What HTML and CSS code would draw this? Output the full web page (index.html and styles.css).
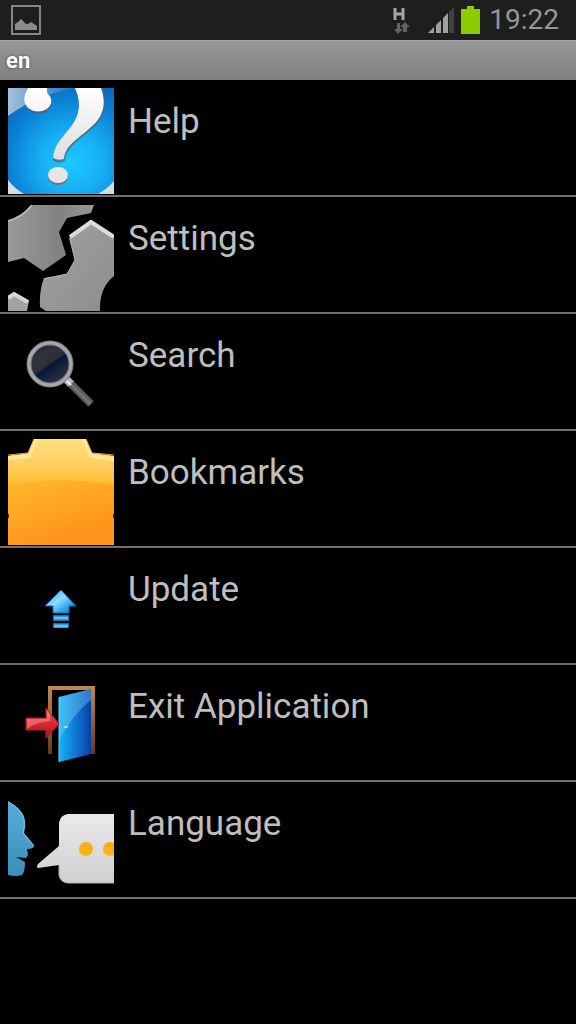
FILE: index.html
```html
<!DOCTYPE html>
<html lang="en">
<head>
  <meta charset="UTF-8">
  <meta name="viewport" content="width=device-width, initial-scale=1">
  <title>en</title>
  <link rel="stylesheet" href="styles.css">
</head>
<body>
<div class="status">
  <svg class="picture" width="30" height="30" viewBox="0 0 30 30">
    <rect x="1" y="1" width="28" height="28" fill="none" stroke="#858585" stroke-width="2"/>
    <path d="M4 25V19L7 17L10 14L15 19H17L20 17L26 21V25Z" fill="#8c8c8c"/>
  </svg>
  <svg class="network" width="18" height="28" viewBox="0 0 18 28">
    <path d="M2 2V14M10 2V14M2 8H10" fill="none" stroke="#a5a5a5" stroke-width="3"/>
    <path d="M4 17H7V23H10L5 28L1 23H4ZM10 26V21H7L12 16L17 21H14V26Z" fill="#626262"/>
  </svg>
  <svg class="signal" width="28" height="27" viewBox="0 0 28 27">
    <path d="M1 26L7 20V26ZM9 26V18L14 13V26ZM16 26V11L21 6V26Z" fill="#a0a0a0"/>
    <path d="M22 26V5L27 0V26Z" fill="#414141"/>
  </svg>
  <svg class="battery" width="19" height="29" viewBox="0 0 19 29">
    <path d="M0 3H6V0H13V3H19V28H0Z" fill="#8dcc00"/>
  </svg>
  <span class="clock">19:22</span>
</div>
<h1 class="title">en</h1>
<ul class="menu">
  <li>
    <a href="#">
      <svg viewBox="0 0 106 106">
        <defs>
          <radialGradient id="helpBlue" cx="0.6" cy="0.7" r="0.8">
            <stop offset="0" stop-color="#1cc8ff"/>
            <stop offset="0.35" stop-color="#18b0f6"/>
            <stop offset="0.75" stop-color="#0a7fd3"/>
            <stop offset="1" stop-color="#0c66bc"/>
          </radialGradient>
          <linearGradient id="helpShine" x1="0" y1="0" x2="1" y2="0">
            <stop offset="0" stop-color="#a4bfde"/>
            <stop offset="1" stop-color="#1b74c4"/>
          </linearGradient>
          <linearGradient id="helpMark" x1="0" y1="0" x2="0" y2="1">
            <stop offset="0" stop-color="#fff"/>
            <stop offset="1" stop-color="#dedede"/>
          </linearGradient>
        </defs>
        <rect width="106" height="106" fill="url(#helpBlue)"/>
        <path d="M0 0H68Q30 6 0 28Z" fill="url(#helpShine)"/>
        <path d="M0 92Q7 101 16 106H0ZM106 93Q99 101 90 106H106Z" fill="#d5dde4"/>
        <path d="M20 0Q14 13 19 20Q28 30 40 23Q47 16 42 8Q38 5 39 0ZM67 0Q75 14 69 29C64 44 46 51 45 72Q50 77 57 73C58 57 75 51 90 35Q101 22 95 0Z" fill="#555f69" opacity="0.7"/>
        <path d="M20 0Q13 12 19 19Q28 27 39 21Q46 15 42 8Q38 5 39 0ZM67 0Q73 13 70 25C65 43 47 50 45 70Q50 73 56 71C57 55 75 49 89 33Q100 19 93 0Z" fill="url(#helpMark)"/>
        <ellipse cx="50" cy="89" rx="10" ry="8" fill="#6c747b"/>
        <ellipse cx="50" cy="87" rx="10" ry="8" fill="#e6e6e6"/>
      </svg>
      <span>Help</span>
    </a>
  </li>
  <li>
    <a href="#">
      <svg viewBox="0 0 106 106">
        <defs>
          <linearGradient id="gearBack" x1="0" y1="0" x2="1" y2="0">
            <stop offset="0" stop-color="#999"/>
            <stop offset="0.6" stop-color="#828282"/>
            <stop offset="1" stop-color="#989898"/>
          </linearGradient>
          <linearGradient id="gearFront" x1="0" y1="0" x2="1" y2="1">
            <stop offset="0" stop-color="#a2a2a2"/>
            <stop offset="1" stop-color="#8d8d8d"/>
          </linearGradient>
        </defs>
        <path d="M24 0H86L83 8L59 13L51 27L58 50L35 66L16 53L0 57V16Q15 12 24 0Z" fill="url(#gearBack)"/>
        <path d="M0 16Q15 12 24 0" fill="none" stroke="#b9b9b9" stroke-width="2"/>
        <path d="M61 33L83 15L106 31V71Q91 83 92 106H38L32 102Q31 86 36 73L59 69L67 55Z" fill="url(#gearFront)"/>
        <path d="M62 32L83 17L106 32" fill="none" stroke="#dcdcdc" stroke-width="4"/>
        <path d="M36 74L59 69L67 55L62 34" fill="none" stroke="#b3b3b3" stroke-width="1"/>
        <path d="M0 93L6 87L21 96L19 106H0Z" fill="#a2a2a2"/>
        <path d="M0 93L6 89L20 97" fill="none" stroke="#d6d6d6" stroke-width="4"/>
      </svg>
      <span>Settings</span>
    </a>
  </li>
  <li>
    <a href="#">
      <svg viewBox="0 0 106 106">
        <defs>
          <linearGradient id="lens" x1="0.1" y1="0" x2="0.8" y2="1">
            <stop offset="0" stop-color="#182037"/>
            <stop offset="0.3" stop-color="#30333a"/>
            <stop offset="0.5" stop-color="#2c2f35"/>
            <stop offset="0.56" stop-color="#061633"/>
            <stop offset="0.66" stop-color="#14213c"/>
            <stop offset="1" stop-color="#34363b"/>
          </linearGradient>
          <linearGradient id="handle" gradientUnits="userSpaceOnUse" x1="76" y1="69" x2="69" y2="76">
            <stop offset="0" stop-color="#4e4e4e"/>
            <stop offset="0.5" stop-color="#777"/>
            <stop offset="1" stop-color="#333"/>
          </linearGradient>
        </defs>
        <path d="M62 61L83 82" stroke="url(#handle)" stroke-width="8"/>
        <path d="M57 56L63 62" stroke="#b5b5b8" stroke-width="8"/>
        <path d="M57 57L63 63" stroke="#eee" stroke-width="2"/>
        <circle cx="42" cy="42" r="21" fill="url(#lens)" stroke="#77777d" stroke-width="5"/>
        <circle cx="42" cy="42" r="21" fill="none" stroke="#a6a6ad" stroke-width="3"/>
      </svg>
      <span>Search</span>
    </a>
  </li>
  <li>
    <a href="#">
      <svg viewBox="0 0 106 106">
        <defs>
          <linearGradient id="starBody" x1="0" y1="0" x2="0.3" y2="1">
            <stop offset="0" stop-color="#ffb92d"/>
            <stop offset="0.5" stop-color="#ffb128"/>
            <stop offset="1" stop-color="#ff941b"/>
          </linearGradient>
          <linearGradient id="starShine" x1="0" y1="0" x2="0" y2="1">
            <stop offset="0" stop-color="#ffdf80"/>
            <stop offset="0.6" stop-color="#ffce5c"/>
            <stop offset="1" stop-color="#ffb92f"/>
          </linearGradient>
        </defs>
        <path d="M26 0H77L84 14L106 17V74L105 77L106 80V106H0V80L1 77L0 74V17L20 14Z" fill="url(#starBody)"/>
        <path d="M26 0H77L84 14L106 17V46Q53 36 0 47V17L20 14Z" fill="url(#starShine)"/>
        <path d="M0 19L21 17L28 0M76 0L83 17L106 20" fill="none" stroke="#ffe6a0" stroke-width="4"/>
        <path d="M0 16L20 14L26 0M78 0L84 14L106 16" fill="none" stroke="#e6a428" stroke-width="1"/>
      </svg>
      <span>Bookmarks</span>
    </a>
  </li>
  <li>
    <a href="#">
      <svg viewBox="0 0 106 106">
        <defs>
          <linearGradient id="arrowBlue" x1="0" y1="0" x2="1" y2="1">
            <stop offset="0" stop-color="#2b9de4"/>
            <stop offset="0.45" stop-color="#8fdcff"/>
            <stop offset="0.7" stop-color="#2fa9ef"/>
            <stop offset="1" stop-color="#0872c2"/>
          </linearGradient>
        </defs>
        <path d="M53 34L68 50H61V57H45V50H37Z" fill="url(#arrowBlue)" stroke="#0c69b4" stroke-width="1"/>
        <path d="M45 59H61V65H45ZM45 67H61V72H45Z" fill="#0c70be"/>
        <path d="M46 62H60M46 70H60" stroke="#5ec3f8" stroke-width="3"/>
      </svg>
      <span>Update</span>
    </a>
  </li>
  <li>
    <a href="#">
      <svg viewBox="0 0 106 106">
        <defs>
          <linearGradient id="frame" x1="0" y1="0" x2="0" y2="1">
            <stop offset="0" stop-color="#c08a4c"/>
            <stop offset="1" stop-color="#6b3527"/>
          </linearGradient>
          <linearGradient id="door" x1="0" y1="0" x2="1" y2="0">
            <stop offset="0" stop-color="#14b4f4"/>
            <stop offset="0.5" stop-color="#1079d6"/>
            <stop offset="1" stop-color="#0740a6"/>
          </linearGradient>
          <linearGradient id="arrowRed" x1="0" y1="0" x2="0" y2="1">
            <stop offset="0" stop-color="#e45c5c"/>
            <stop offset="0.5" stop-color="#d92b32"/>
            <stop offset="1" stop-color="#a70f18"/>
          </linearGradient>
        </defs>
        <path d="M40 13H87V81H83V17H44V81H40Z" fill="url(#frame)"/>
        <path d="M51 24L83 16V81L51 89Z" fill="url(#door)"/>
        <path d="M51 24L83 16V27Q66 40 51 67Z" fill="#8bdcff" opacity="0.35"/>
        <path d="M51 24V89" stroke="#62d6ff" stroke-width="1"/>
        <ellipse cx="58" cy="54" rx="2" ry="1" fill="#d5e6ee"/>
        <path d="M18 45H38V35L51 51L38 65V57H18Z" fill="url(#arrowRed)" stroke="#b91e26" stroke-width="1"/>
        <path d="M19 56V46H39V38L42 41V48Q28 49 19 56Z" fill="#ffb3b3" opacity="0.4"/>
      </svg>
      <span>Exit Application</span>
    </a>
  </li>
  <li>
    <a href="#">
      <svg viewBox="0 0 106 106">
        <defs>
          <linearGradient id="face" x1="0" y1="0" x2="0" y2="1">
            <stop offset="0" stop-color="#55abd7"/>
            <stop offset="1" stop-color="#3c8fbd"/>
          </linearGradient>
          <linearGradient id="bubble" x1="0" y1="0" x2="0" y2="1">
            <stop offset="0" stop-color="#e9e9e9"/>
            <stop offset="1" stop-color="#d0d0d0"/>
          </linearGradient>
          <linearGradient id="dot" x1="0" y1="0" x2="0" y2="1">
            <stop offset="0" stop-color="#f8a91a"/>
            <stop offset="1" stop-color="#ffb70e"/>
          </linearGradient>
        </defs>
        <path d="M0 11Q15 19 17 30Q18 37 16 43L26 55Q27 59 19 59L20 65L18 68L8 67L17 72Q17 82 14 85Q7 87 0 85Z" fill="url(#face)"/>
        <path d="M0 12Q14 19 16 30Q17 37 15 43L25 55" fill="none" stroke="#7cc5e6" stroke-width="1"/>
        <path d="M60 24H106V93H60Q52 92 51 85V75L30 78Q28 77 30 74L51 56V33Q52 25 60 24Z" fill="url(#bubble)"/>
        <path d="M51 75V85Q52 92 60 93H106" fill="none" stroke="#b5b5b5" stroke-width="1"/>
        <circle cx="78" cy="59" r="7" fill="url(#dot)"/>
        <circle cx="102" cy="59" r="7" fill="url(#dot)"/>
      </svg>
      <span>Language</span>
    </a>
  </li>
</ul>
</body>
</html>
```
FILE: styles.css
```css
* {
  margin: 0;
  padding: 0;
  box-sizing: border-box;
}

body {
  background-color: #000;
  font-family: Roboto, "Liberation Sans", sans-serif;
}

.status {
  display: flex;
  align-items: center;
  height: 40px;
  padding: 0 17px 0 11px;
  background-color: #1e1e1e;
}

.network {
  margin-left: auto;
  margin-right: 16px;
}

.signal {
  margin-right: 6px;
}

.battery {
  margin-right: 9px;
}

.clock {
  font-size: 28px;
  line-height: 40px;
  color: #969696;
}

.title {
  height: 40px;
  padding-left: 6px;
  border-top: 1px solid #a5a5a5;
  background: linear-gradient(#989898, #7f7f7f);
  font-size: 22px;
  line-height: 40px;
  color: #fff;
  text-shadow: 0 0 3px #444;
}

.menu {
  list-style: none;
}

.menu a {
  display: flex;
  gap: 14px;
  padding: 8px 8px 1px;
  border-bottom: 2px solid #707070;
  color: #bebebe;
  text-decoration: none;
}

.menu svg {
  flex: none;
  width: 106px;
  height: 106px;
}

.menu span {
  padding-top: 12px;
  font-size: 35px;
  line-height: 44px;
}
```
